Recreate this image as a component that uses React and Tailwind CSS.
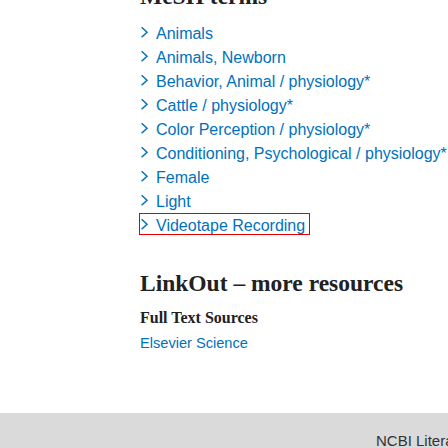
import React from "react";

const terms = [
  "Animals",
  "Animals, Newborn",
  "Behavior, Animal / physiology*",
  "Cattle / physiology*",
  "Color Perception / physiology*",
  "Conditioning, Psychological / physiology*",
  "Female",
  "Light",
  "Videotape Recording",
];

const sans = { fontFamily: '"Liberation Sans", Arial, sans-serif' };
const serif = { fontFamily: '"Liberation Serif", "Times New Roman", serif' };

function Chevron() {
  return (
    <svg width="16" height="24" viewBox="0 0 16 24" className="shrink-0 block">
      <path d="M1.6 5.3 L7 10.3 L1.6 15.3" fill="none" stroke="#0071bc" strokeWidth="1.5" />
    </svg>
  );
}

export default function App() {
  return (
    <div className="w-[448px] h-[448px] overflow-hidden bg-white flex flex-col">
      <div className="pl-[140px] -mt-[18px]">
        <h2 className="text-[23.5px] leading-[28px] font-bold text-[#212121] whitespace-nowrap" style={serif}>
          MeSH terms
        </h2>
        <ul className="mt-[12px] flex flex-col" style={sans}>
          {terms.map((t, i) => (
            <li key={t} className="h-[24px]">
              <a
                href="#"
                className={
                  "flex items-start text-[16px] leading-[24px] text-[#0071bc] whitespace-nowrap w-max pr-[4px] " +
                  (i === terms.length - 1 ? "h-[20px] outline outline-[#e60000]" : "h-[24px]")
                }
              >
                <Chevron />
                <span>{t}</span>
              </a>
            </li>
          ))}
        </ul>
        <h3 className="mt-[31px] text-[23.5px] leading-[28px] font-bold text-[#212121] whitespace-nowrap" style={serif}>
          LinkOut – more resources
        </h3>
        <div className="mt-[9px] text-[16px] leading-[24px] font-bold text-[#212121] whitespace-nowrap" style={serif}>
          Full Text Sources
        </div>
        <a href="#" className="block mt-[3px] text-[14.6px] leading-[20px] text-[#0071bc] whitespace-nowrap" style={sans}>
          Elsevier Science
        </a>
      </div>
      <footer className="mt-[60px] flex-1 bg-[#dadada]">
        <div className="pl-[376px] pt-[18px] text-[15px] leading-[20px] text-[#333333] whitespace-nowrap" style={sans}>
          NCBI Literature Resources
        </div>
      </footer>
    </div>
  );
}
